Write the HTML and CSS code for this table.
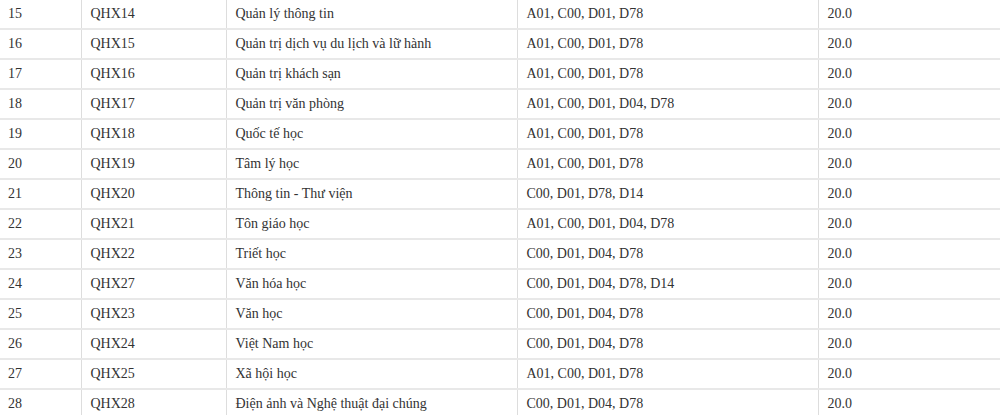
FILE: index.html
```html
<!DOCTYPE html>
<html lang="vi">
<head>
<meta charset="utf-8">
<link rel="stylesheet" href="styles.css">
</head>
<body>
<table class="grid">
  <colgroup>
    <col class="c1"><col class="c2"><col class="c3"><col class="c4"><col class="c5">
  </colgroup>
  <tbody>
    <tr><td>15</td><td>QHX14</td><td>Quản lý thông tin</td><td>A01, C00, D01, D78</td><td>20.0</td></tr>
    <tr><td>16</td><td>QHX15</td><td>Quản trị dịch vụ du lịch và lữ hành</td><td>A01, C00, D01, D78</td><td>20.0</td></tr>
    <tr><td>17</td><td>QHX16</td><td>Quản trị khách sạn</td><td>A01, C00, D01, D78</td><td>20.0</td></tr>
    <tr><td>18</td><td>QHX17</td><td>Quản trị văn phòng</td><td>A01, C00, D01, D04, D78</td><td>20.0</td></tr>
    <tr><td>19</td><td>QHX18</td><td>Quốc tế học</td><td>A01, C00, D01, D78</td><td>20.0</td></tr>
    <tr><td>20</td><td>QHX19</td><td>Tâm lý học</td><td>A01, C00, D01, D78</td><td>20.0</td></tr>
    <tr><td>21</td><td>QHX20</td><td>Thông tin - Thư viện</td><td>C00, D01, D78, D14</td><td>20.0</td></tr>
    <tr><td>22</td><td>QHX21</td><td>Tôn giáo học</td><td>A01, C00, D01, D04, D78</td><td>20.0</td></tr>
    <tr><td>23</td><td>QHX22</td><td>Triết học</td><td>C00, D01, D04, D78</td><td>20.0</td></tr>
    <tr><td>24</td><td>QHX27</td><td>Văn hóa học</td><td>C00, D01, D04, D78, D14</td><td>20.0</td></tr>
    <tr><td>25</td><td>QHX23</td><td>Văn học</td><td>C00, D01, D04, D78</td><td>20.0</td></tr>
    <tr><td>26</td><td>QHX24</td><td>Việt Nam học</td><td>C00, D01, D04, D78</td><td>20.0</td></tr>
    <tr><td>27</td><td>QHX25</td><td>Xã hội học</td><td>A01, C00, D01, D78</td><td>20.0</td></tr>
    <tr><td>28</td><td>QHX28</td><td>Điện ảnh và Nghệ thuật đại chúng</td><td>C00, D01, D04, D78</td><td>20.0</td></tr>
  </tbody>
</table>
</body>
</html>
```

FILE: styles.css
```css
html, body {
  margin: 0;
  padding: 0;
  background: #ffffff;
}
body {
  font-family: "Liberation Serif", "Times New Roman", serif;
  font-size: 14px;
  color: #333333;
  overflow: hidden;
}
.grid {
  border-collapse: collapse;
  width: 1010px;
  margin-top: -2px;
  table-layout: fixed;
}
.c1 { width: 81px; }
.c2 { width: 145px; }
.c3 { width: 291px; }
.c4 { width: 301px; }
.c5 { width: 192px; }
.grid td {
  height: 28px;
  padding: 0 9px;
  line-height: 20px;
  vertical-align: middle;
  border-top: 2px solid #e8e8e8;
  border-left: 1px solid #dddddd;
  white-space: nowrap;
}
.grid td:first-child {
  border-left: none;
  padding-left: 8px;
}
```
